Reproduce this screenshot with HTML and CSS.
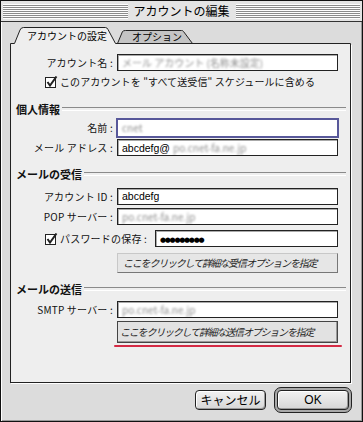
FILE: index.html
```html
<!DOCTYPE html>
<html lang="ja">
<head>
  <meta charset="UTF-8" />
  <title>アカウントの編集</title>
  <link rel="stylesheet" href="styles.css">
</head>
<body>
  <div class="window">
    <!-- Title bar -->
    <div class="titlebar">
      <span class="stripes"></span>
      <span class="title">アカウントの編集</span>
      <span class="stripes"></span>
    </div>

    <!-- Tabs -->
    <div class="tabs">
      <svg class="tab-shapes" width="361" height="18" viewBox="0 0 361 18">
        <path d="M116.5 17.5 L121.5 5.5 Q122.5 4.5 124.5 4.5 H180.5 Q182 4.5 182.5 5.5 L191.5 17.5 Z" fill="#c4c4c4" stroke="#222" />
        <path d="M9.5 18 V17.5 H13.5 L19 4 Q20 1.5 22.5 1.5 H104.5 Q106 1.5 107 3.5 L114.5 17.5 V18 Z" fill="#eeeeee" />
        <path d="M9.5 18 V17.5 H13.5 L19 4 Q20 1.5 22.5 1.5 H104.5 Q106 1.5 107 3.5 L114.5 17.5 H349.5 V18" fill="none" stroke="#222" />
      </svg>
      <div class="tab-labels">
        <span class="tab">アカウントの設定</span>
        <span class="tab back">オプション</span>
      </div>
    </div>

    <!-- Tab panel -->
    <div class="panel">
      <div class="field first">
        <span class="lbl">アカウント名 :</span>
        <span class="box"><span class="blur">メール アカウント (名称未設定)</span></span>
      </div>
      <div class="check-row">
        <svg class="check" width="13" height="12" viewBox="0 0 13 12">
          <rect x="0.5" y="1.5" width="10" height="10" fill="#fff" stroke="#222" />
          <path d="M2.5 6 L5 9.5 L11.5 0.5" fill="none" stroke="#222" stroke-width="2" />
        </svg>
        <span>このアカウントを "すべて送受信" スケジュールに含める</span>
      </div>

      <div class="section s1"><span>個人情報</span></div>
      <div class="field tight">
        <span class="lbl">名前 :</span>
        <span class="box focus"><span class="blur">cnet</span></span>
      </div>
      <div class="field tight">
        <span class="lbl">メール アドレス :</span>
        <span class="box">abcdefg@ <span class="blur">po.cnet-fa.ne.jp</span></span>
      </div>

      <div class="section s2"><span>メールの受信</span></div>
      <div class="field a-id">
        <span class="lbl">アカウント ID :</span>
        <span class="box">abcdefg</span>
      </div>
      <div class="field tight">
        <span class="lbl">POP サーバー :</span>
        <span class="box"><span class="blur">po.cnet-fa.ne.jp</span></span>
      </div>
      <div class="field pass">
        <span class="lbl check-lbl">
          <svg class="check" width="13" height="12" viewBox="0 0 13 12">
            <rect x="0.5" y="1.5" width="10" height="10" fill="#fff" stroke="#222" />
            <path d="M2.5 6 L5 9.5 L11.5 0.5" fill="none" stroke="#222" stroke-width="2" />
          </svg>
          パスワードの保存 :
        </span>
        <span class="box short"><span class="dots">●●●●●●●●●</span></span>
      </div>
      <div class="opt-btn recv">ここをクリックして詳細な受信オプションを指定</div>

      <div class="section s3"><span>メールの送信</span></div>
      <div class="field smtp">
        <span class="lbl">SMTP サーバー :</span>
        <span class="box"><span class="blur">po.cnet-fa.ne.jp</span></span>
      </div>
      <div class="opt-btn send">ここをクリックして詳細な送信オプションを指定</div>
      <div class="mark"></div>
    </div>

    <!-- Buttons -->
    <div class="footer">
      <button class="btn">キャンセル</button>
      <span class="default-ring"><button class="btn ok">OK</button></span>
    </div>
  </div>
</body>
</html>
```

FILE: styles.css
```css
* {
  box-sizing: border-box;
}

body {
  margin: 0;
  font-family: "Noto Sans CJK JP", "Noto Sans", sans-serif;
  font-size: 10px;
  color: #111;
  background: #dcdcdc;
}

.window {
  width: 363px;
  height: 422px;
  border: 1px solid #111;
  background: #dcdcdc;
  box-shadow: inset 1px 1px 0 #fff, inset -1px -1px 0 #999;
  display: flex;
  flex-direction: column;
}

/* title bar */
.titlebar {
  height: 21px;
  display: flex;
  align-items: center;
  padding: 0 2px 0 2px;
  border-bottom: 1px solid #333;
  background: #e4e4e4;
}

.stripes {
  flex: 1;
  height: 15px;
  background: repeating-linear-gradient(to bottom, #fff 0 1px, #8c8c8c 1px 2px);
}

.title {
  font-size: 12px;
  line-height: 14px;
  margin: 0 6px;
  color: #000;
}

/* tabs */
.tabs {
  display: grid;
  height: 18px;
  margin-top: 4px;
}

.tab-shapes,
.tab-labels {
  grid-area: 1 / 1;
}

.tab-shapes {
  display: block;
}

.tab-labels {
  display: flex;
  align-items: flex-start;
  gap: 25px;
  padding: 4px 0 0 26px;
  line-height: 12px;
  color: #000;
}

.tab.back {
  padding-top: 1px;
}

/* panel */
.panel {
  margin-left: 9px;
  width: 341px;
  height: 339px;
  border: 1px solid #222;
  border-top: none;
  background: #eeeeee;
  box-shadow: 1px 1px 0 #fff;
  padding: 0 4px 0 5px;
}

.field {
  display: flex;
  align-items: center;
  height: 17px;
  margin-top: 2px;
}

.field.first {
  margin-top: 10px;
}

.field.tight {
  margin-top: 3px;
}

.field.a-id {
  margin-top: 7px;
}

.field.pass {
  margin-top: 5px;
}

.field.smtp {
  margin-top: 5px;
}

.lbl {
  width: 101px;
  padding-right: 4px;
  text-align: right;
  white-space: nowrap;
  line-height: 12px;
  letter-spacing: 0.2px;
}

.check-lbl {
  width: 139px;
  display: flex;
  align-items: center;
  padding-left: 29px;
  text-align: left;
}

.box {
  width: 221px;
  height: 17px;
  border: 1px solid #222;
  box-shadow: inset 1px 1px 0 #aaa;
  background: #fff;
  padding-left: 4px;
  font-family: "Liberation Sans", "Noto Sans CJK JP", sans-serif;
  font-size: 10.5px;
  line-height: 15px;
  white-space: nowrap;
  overflow: hidden;
  color: #000;
}

.box.focus {
  width: 223px;
  height: 20px;
  margin-left: -1px;
  border: 2px solid #58589a;
  box-shadow: none;
  line-height: 16px;
  padding-left: 4px;
}

.box.short {
  width: 183px;
}

.blur {
  color: #909090;
  filter: blur(0.8px);
  font-family: "Noto Sans CJK JP", sans-serif;
  font-size: 10px;
}

.dots {
  font-family: "DejaVu Sans", sans-serif;
  font-size: 7px;
  letter-spacing: -1.3px;
}

.check-row {
  display: flex;
  align-items: center;
  height: 12px;
  margin-top: 5px;
  padding-left: 29px;
  line-height: 12px;
  letter-spacing: 0.1px;
}

.check {
  display: block;
  flex: none;
  margin-right: 2px;
}

/* section headings */
.section {
  display: flex;
  align-items: center;
  height: 14px;
  font-size: 11px;
  font-weight: bold;
  line-height: 14px;
}

.section::after {
  content: "";
  flex: 1;
  height: 2px;
  margin-left: 2px;
  border-top: 1px solid #8a8a8a;
  border-bottom: 1px solid #fff;
}

.section.s1 {
  margin-top: 14px;
}

.section.s2 {
  margin-top: 11px;
}

.section.s3 {
  margin-top: 9px;
}

/* option buttons */
.opt-btn {
  width: 221px;
  margin-left: 101px;
  font-style: italic;
  letter-spacing: -1.2px;
  white-space: nowrap;
  color: #222;
}

.opt-btn.recv {
  height: 20px;
  margin-top: 6px;
  padding-left: 5px;
  line-height: 18px;
  background: #e6e6e6;
  border: 1px solid;
  border-color: #c8c8c8 #777 #777 #c8c8c8;
}

.opt-btn.send {
  height: 22px;
  margin-top: 3px;
  padding-left: 2px;
  line-height: 20px;
  background: #e2e2e2;
  border: 1px solid #444;
  box-shadow: inset -1px -1px 0 #999;
}

.mark {
  width: 228px;
  height: 2px;
  margin: 2px 0 0 98px;
  background: #d42a44;
  border-radius: 1px;
}

/* footer buttons */
.footer {
  display: flex;
  justify-content: flex-end;
  align-items: center;
  gap: 8px;
  margin-top: 4px;
  height: 26px;
  padding-right: 10px;
}

.btn {
  height: 20px;
  width: 71px;
  padding: 0;
  border: 1px solid #222;
  border-radius: 4px;
  background: linear-gradient(#f2f2f2, #d6d6d6);
  box-shadow: inset 1px 1px 0 #fff, inset -1px -1px 0 #999;
  font-family: "Noto Sans CJK JP", sans-serif;
  font-size: 12px;
  line-height: 16px;
  color: #000;
}

.default-ring {
  display: flex;
  width: 78px;
  height: 26px;
  padding: 2px;
  border: 1px solid #222;
  border-radius: 7px;
  background: #a8a8a8;
}

.btn.ok {
  width: 72px;
  font-family: "Liberation Sans", sans-serif;
}
```
